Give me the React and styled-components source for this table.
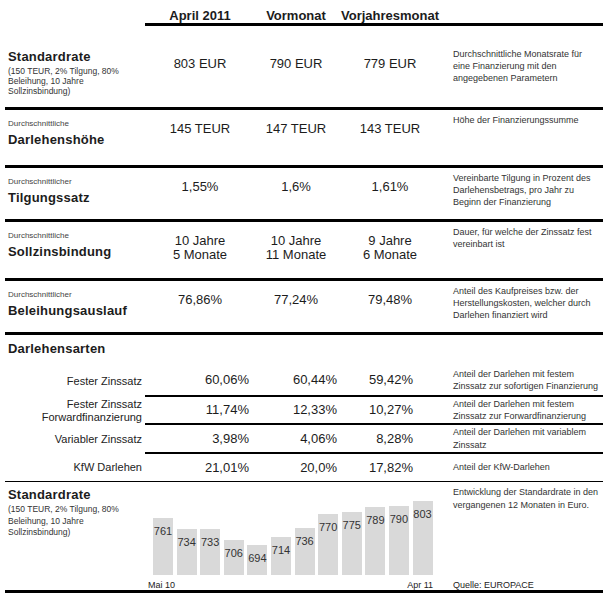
import React from 'react'
import styled, { createGlobalStyle } from 'styled-components'

const GlobalStyle = createGlobalStyle`
  body {
    margin: 0;
    background: #fff;
    font-family: "Liberation Sans", Arial, sans-serif;
    color: #1c1c1c;
  }
`

const Page = styled.div`
  width: 598px;
  margin-left: 5px;
`

const HeaderRow = styled.div`
  display: grid;
  grid-template-columns: 110px 82px 106px 1fr;
  margin-left: 140px;
  height: 23px;
  align-items: end;
  border-bottom: 3px solid #000;
`

const HeaderCell = styled.div`
  font-size: 13px;
  font-weight: bold;
  line-height: 15px;
  text-align: center;
`

const MetricRow = styled.div`
  display: grid;
  grid-template-columns: 140px 110px 82px 106px 1fr;
  height: ${p => p.$h}px;
  border-bottom: 3px solid #000;
`

const LabelCell = styled.div`
  padding: ${p => p.$top}px 0 0 3px;
`

const SmallLabel = styled.div`
  font-size: 8px;
  line-height: 10px;
  color: #444;
`

const BoldLabel = styled.div`
  font-size: 13px;
  font-weight: bold;
  line-height: 15px;
  letter-spacing: 0.2px;
  margin-top: ${p => p.$gap || 0}px;
`

const SubText = styled.div`
  font-size: 8.5px;
  line-height: ${p => p.$lh || 10}px;
  color: #333;
  margin-top: 2px;
`

const ValueCell = styled.div`
  padding-top: ${p => p.$top}px;
  font-size: 13px;
  line-height: 14px;
  text-align: center;
`

const DescCell = styled.div`
  padding: ${p => p.$top}px 0 0 10px;
  font-size: 9px;
  line-height: 12px;
  color: #333;
  white-space: nowrap;
`

const SectionTitle = styled.div`
  height: 30px;
  box-sizing: border-box;
  padding: 6px 0 0 3px;
  font-size: 13px;
  font-weight: bold;
  line-height: 15px;
  letter-spacing: 0.2px;
`

const SubRow = styled.div`
  display: grid;
  grid-template-columns: 140px 1fr;
  border-bottom: ${p => (p.$last ? '1px solid #000' : 'none')};
`

const SubLabel = styled.div`
  display: flex;
  flex-direction: column;
  justify-content: center;
  align-items: flex-end;
  padding-right: 3px;
  font-size: 11px;
  line-height: 13px;
  color: #222;
`

const SubCells = styled.div`
  display: grid;
  grid-template-columns: 104px 88px 76px 1fr;
  align-items: center;
  height: ${p => p.$h}px;
  border-bottom: ${p => (p.$last ? 'none' : '2px solid #000')};
`

const SubValue = styled.div`
  font-size: 13px;
  line-height: 14px;
  text-align: right;
`

const SubDesc = styled.div`
  padding-left: 40px;
  font-size: 9px;
  line-height: 12.5px;
  color: #333;
  white-space: nowrap;
`

const ChartSection = styled.div`
  display: grid;
  grid-template-columns: 140px 298px 1fr;
  height: 108px;
  border-bottom: 3px solid #000;
`

const ChartLabel = styled.div`
  padding: 5px 0 0 3px;
`

const ChartColumn = styled.div`
  display: flex;
  flex-direction: column;
`

const Bars = styled.div`
  flex: 1;
  display: flex;
  align-items: flex-end;
  gap: 3.6px;
  padding-left: 8px;
`

const Bar = styled.div`
  width: 20px;
  background: #d9d9d9;
  box-sizing: border-box;
  padding-top: 7px;
  font-size: 11px;
  line-height: 12px;
  text-align: center;
  color: #333;
  white-space: nowrap;
`

const Axis = styled.div`
  display: flex;
  justify-content: space-between;
  align-items: flex-end;
  width: 285px;
  height: 15px;
  margin-left: 3px;
  font-size: 9px;
  line-height: 10px;
  color: #222;
`

const ChartDesc = styled.div`
  display: flex;
  flex-direction: column;
  justify-content: space-between;
  padding: 4px 0 0 10px;
  font-size: 9px;
  line-height: 12.5px;
  color: #333;
  white-space: nowrap;
`

const Source = styled.div`
  font-size: 9px;
  line-height: 10px;
  color: #222;
`

const Lines = ({ lines }) => lines.map((l, i) => <div key={i}>{l}</div>)

const metrics = [
  {
    small: 'Durchschnittliche',
    title: 'Darlehenshöhe',
    values: ['145 TEUR', '147 TEUR', '143 TEUR'],
    desc: ['Höhe der Finanzierungssumme'],
    h: 55,
  },
  {
    small: 'Durchschnittlicher',
    title: 'Tilgungssatz',
    values: ['1,55%', '1,6%', '1,61%'],
    desc: ['Vereinbarte Tilgung in Prozent des', 'Darlehensbetrags, pro Jahr zu', 'Beginn der Finanzierung'],
    h: 51,
  },
  {
    small: 'Durchschnittliche',
    title: 'Sollzinsbindung',
    values: [['10 Jahre', '5 Monate'], ['10 Jahre', '11 Monate'], ['9 Jahre', '6 Monate']],
    desc: ['Dauer, für welche der Zinssatz fest', 'vereinbart ist'],
    h: 56,
  },
  {
    small: 'Durchschnittlicher',
    title: 'Beleihungsauslauf',
    values: ['76,86%', '77,24%', '79,48%'],
    desc: ['Anteil des Kaufpreises bzw. der', 'Herstellungskosten, welcher durch', 'Darlehen finanziert wird'],
    h: 51,
  },
]

const loanTypes = [
  {
    label: ['Fester Zinssatz'],
    values: ['60,06%', '60,44%', '59,42%'],
    desc: ['Anteil der Darlehen mit festem', 'Zinssatz zur sofortigen Finanzierung'],
    h: 30,
  },
  {
    label: ['Fester Zinssatz', 'Forwardfinanzierung'],
    values: ['11,74%', '12,33%', '10,27%'],
    desc: ['Anteil der Darlehen mit festem', 'Zinssatz zur Forwardfinanzierung'],
    h: 26,
  },
  {
    label: ['Variabler Zinssatz'],
    values: ['3,98%', '4,06%', '8,28%'],
    desc: ['Anteil der Darlehen mit variablem', 'Zinssatz'],
    h: 27,
  },
  {
    label: ['KfW Darlehen'],
    values: ['21,01%', '20,0%', '17,82%'],
    desc: ['Anteil der KfW-Darlehen'],
    h: 27,
  },
]

const rates = [761, 734, 733, 706, 694, 714, 736, 770, 775, 789, 790, 803]

const barHeight = v => Math.round(0.404 * (v - 620))

const App = () => {
  return (
    <Page>
      <GlobalStyle />

      <HeaderRow>
        <HeaderCell>April 2011</HeaderCell>
        <HeaderCell>Vormonat</HeaderCell>
        <HeaderCell>Vorjahresmonat</HeaderCell>
      </HeaderRow>

      <MetricRow $h={81}>
        <LabelCell $top={23}>
          <BoldLabel>Standardrate</BoldLabel>
          <SubText>
            <Lines lines={['(150 TEUR, 2% Tilgung, 80%', 'Beleihung, 10 Jahre', 'Sollzinsbindung)']} />
          </SubText>
        </LabelCell>
        <ValueCell $top={31}>803 EUR</ValueCell>
        <ValueCell $top={31}>790 EUR</ValueCell>
        <ValueCell $top={31}>779 EUR</ValueCell>
        <DescCell $top={22}>
          <Lines lines={['Durchschnittliche Monatsrate für', 'eine Finanzierung mit den', 'angegebenen Parametern']} />
        </DescCell>
      </MetricRow>

      {metrics.map(m => (
        <MetricRow key={m.title} $h={m.h}>
          <LabelCell $top={9}>
            <SmallLabel>{m.small}</SmallLabel>
            <BoldLabel $gap={3}>{m.title}</BoldLabel>
          </LabelCell>
          {m.values.map((v, i) => (
            <ValueCell key={i} $top={12}>
              {Array.isArray(v) ? <Lines lines={v} /> : v}
            </ValueCell>
          ))}
          <DescCell $top={4}>
            <Lines lines={m.desc} />
          </DescCell>
        </MetricRow>
      ))}

      <SectionTitle>Darlehensarten</SectionTitle>

      {loanTypes.map((t, idx) => {
        const last = idx === loanTypes.length - 1
        return (
          <SubRow key={idx} $last={last}>
            <SubLabel>
              <Lines lines={t.label} />
            </SubLabel>
            <SubCells $h={t.h} $last={last}>
              {t.values.map((v, i) => (
                <SubValue key={i}>{v}</SubValue>
              ))}
              <SubDesc>
                <Lines lines={t.desc} />
              </SubDesc>
            </SubCells>
          </SubRow>
        )
      })}

      <ChartSection>
        <ChartLabel>
          <BoldLabel>Standardrate</BoldLabel>
          <SubText $lh={11.5}>
            <Lines lines={['(150 TEUR, 2% Tilgung, 80%', 'Beleihung, 10 Jahre', 'Sollzinsbindung)']} />
          </SubText>
        </ChartLabel>
        <ChartColumn>
          <Bars>
            {rates.map((r, i) => (
              <Bar key={i} style={{ height: barHeight(r) }}>
                {r}
              </Bar>
            ))}
          </Bars>
          <Axis>
            <span>Mai 10</span>
            <span>Apr 11</span>
          </Axis>
        </ChartColumn>
        <ChartDesc>
          <div>
            <Lines lines={['Entwicklung der Standardrate in den', 'vergangenen 12 Monaten in Euro.']} />
          </div>
          <Source>Quelle: EUROPACE</Source>
        </ChartDesc>
      </ChartSection>
    </Page>
  )
}

export default App
